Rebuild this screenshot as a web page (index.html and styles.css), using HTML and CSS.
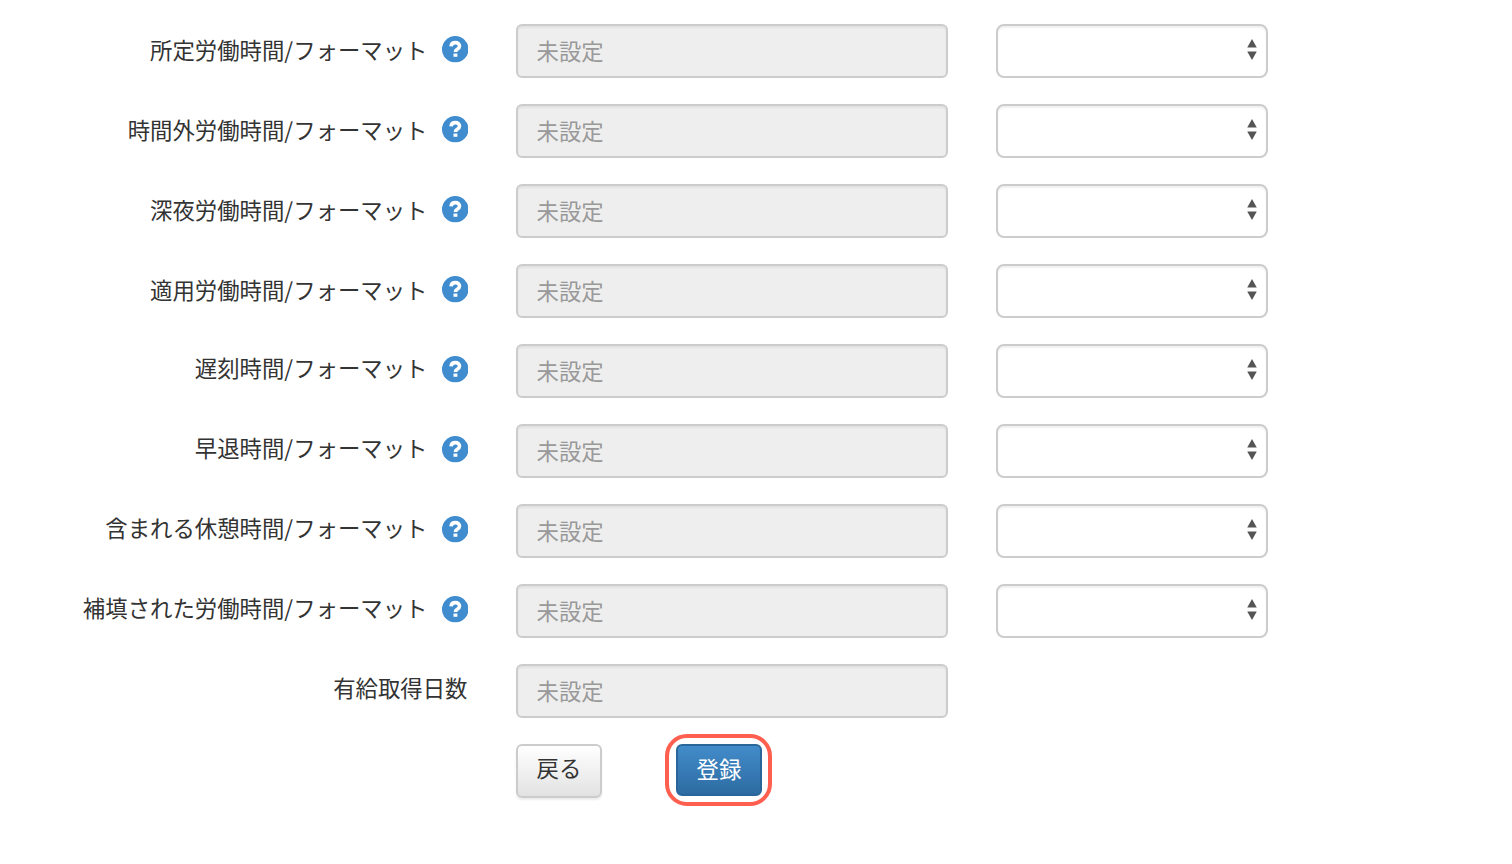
FILE: index.html
```html
<!DOCTYPE html>
<html lang="ja">
<head>
<meta charset="utf-8">
<title>フォーマット設定</title>
<link rel="stylesheet" href="styles.css">
</head>
<body>
<svg class="defs" width="0" height="0" aria-hidden="true">
  <symbol id="q" viewBox="0 0 26 26"><circle cx="13" cy="13" r="13"/><path class="q-mark" d="M8.9 10.2C9.1 7.7 11 6.5 13.2 6.5C15.6 6.5 17.2 7.9 17.2 9.8C17.2 11.6 16 12.4 14.9 13.1C13.9 13.7 13.2 14.2 13.2 15.6"/><rect class="q-dot" x="11.3" y="17.2" width="3.8" height="3.2"/></symbol>
  <symbol id="arrows" viewBox="0 0 12 22"><path d="M6 0L11 9H1zM1 13H11L6 22z"/></symbol>
</svg>
<form class="form">
  <div class="row"><div class="label label-low"><span>所定労働時間/フォーマット</span><svg class="help"><use href="#q"/></svg></div><div class="input">未設定</div><div class="select"><svg class="arrows"><use href="#arrows"/></svg></div></div>
  <div class="row"><div class="label label-low"><span>時間外労働時間/フォーマット</span><svg class="help"><use href="#q"/></svg></div><div class="input">未設定</div><div class="select"><svg class="arrows"><use href="#arrows"/></svg></div></div>
  <div class="row"><div class="label label-low"><span>深夜労働時間/フォーマット</span><svg class="help"><use href="#q"/></svg></div><div class="input">未設定</div><div class="select"><svg class="arrows"><use href="#arrows"/></svg></div></div>
  <div class="row"><div class="label label-low"><span>適用労働時間/フォーマット</span><svg class="help"><use href="#q"/></svg></div><div class="input">未設定</div><div class="select"><svg class="arrows"><use href="#arrows"/></svg></div></div>
  <div class="row"><div class="label"><span>遅刻時間/フォーマット</span><svg class="help"><use href="#q"/></svg></div><div class="input">未設定</div><div class="select"><svg class="arrows"><use href="#arrows"/></svg></div></div>
  <div class="row"><div class="label"><span>早退時間/フォーマット</span><svg class="help"><use href="#q"/></svg></div><div class="input">未設定</div><div class="select"><svg class="arrows"><use href="#arrows"/></svg></div></div>
  <div class="row"><div class="label"><span>含まれる休憩時間/フォーマット</span><svg class="help"><use href="#q"/></svg></div><div class="input">未設定</div><div class="select"><svg class="arrows"><use href="#arrows"/></svg></div></div>
  <div class="row"><div class="label"><span>補填された労働時間/フォーマット</span><svg class="help"><use href="#q"/></svg></div><div class="input">未設定</div><div class="select"><svg class="arrows"><use href="#arrows"/></svg></div></div>
  <div class="row"><div class="label"><span>有給取得日数</span></div><div class="input">未設定</div></div>
  <div class="actions">
    <div class="btn btn-default">戻る</div>
    <div class="btn btn-primary">登録<i class="ring"></i></div>
  </div>
</form>
</body>
</html>
```
FILE: styles.css
```css
* { box-sizing: border-box; }
html, body { margin: 0; height: 100%; background: #fff; overflow: hidden; }
body {
  font-family: "Noto Sans CJK JP", "Liberation Sans", sans-serif;
  font-size: 22.4px;
  color: #333;
}
.defs { position: absolute; }
.form {
  display: flex;
  flex-direction: column;
  gap: 26px;
  padding: 24px 0 0 0;
}
.row {
  display: flex;
  align-items: flex-start;
  height: 54px;
}
.label {
  width: 468px;
  flex: none;
  display: flex;
  justify-content: flex-end;
  align-items: flex-start;
  height: 54px;
  line-height: 32px;
  padding-top: 7px;
  white-space: nowrap;
}
.label span { margin-right: .5px; }
.label-low { padding-top: 9px; }
.label-low .help { margin-top: 3px; }
.help {
  width: 26.5px;
  height: 26.5px;
  margin-left: 13.5px;
  margin-top: 5px;
  fill: #3f8cce;
}
.q-mark { fill: none; stroke: #fff; stroke-width: 3.5; }
.q-dot { fill: #fff; }
.input {
  width: 432px;
  height: 54px;
  margin-left: 48px;
  flex: none;
  padding: 0 18.5px;
  line-height: 48px;
  background: #eee;
  border: 2px solid #ccc;
  border-radius: 6px;
  box-shadow: inset 0 2px 2px rgba(0, 0, 0, .05);
  color: #999;
}
.select {
  width: 272px;
  height: 54px;
  margin-left: 48px;
  flex: none;
  display: flex;
  align-items: center;
  justify-content: flex-end;
  padding-right: 8px;
  background: #fff;
  border: 2px solid #ccc;
  border-radius: 8px;
  box-shadow: inset 0 2px 2px rgba(0, 0, 0, .06);
}
.arrows {
  width: 12px;
  height: 21px;
  fill: #555;
  margin-top: -3px;
}
.actions {
  display: flex;
  gap: 74px;
  padding-left: 516px;
}
.btn {
  position: relative;
  width: 86px;
  height: 52px;
  flex: none;
  text-align: center;
  line-height: 44px;
  border-radius: 6px;
  border: 2px solid #ccc;
}
.btn-default {
  height: 54px;
  line-height: 42px;
  background: linear-gradient(#fff, #e2e2e2);
  box-shadow: 0 2px 2px rgba(0, 0, 0, .08);
  color: #333;
}
.btn-primary {
  background: linear-gradient(#428bca, #2d6ca2);
  border-color: #2b669a;
  color: #fff;
}
.ring {
  position: absolute;
  left: -13px;
  top: -12px;
  width: 107px;
  height: 72px;
  border: 4px solid #ff5f4f;
  border-radius: 22px;
}
```
